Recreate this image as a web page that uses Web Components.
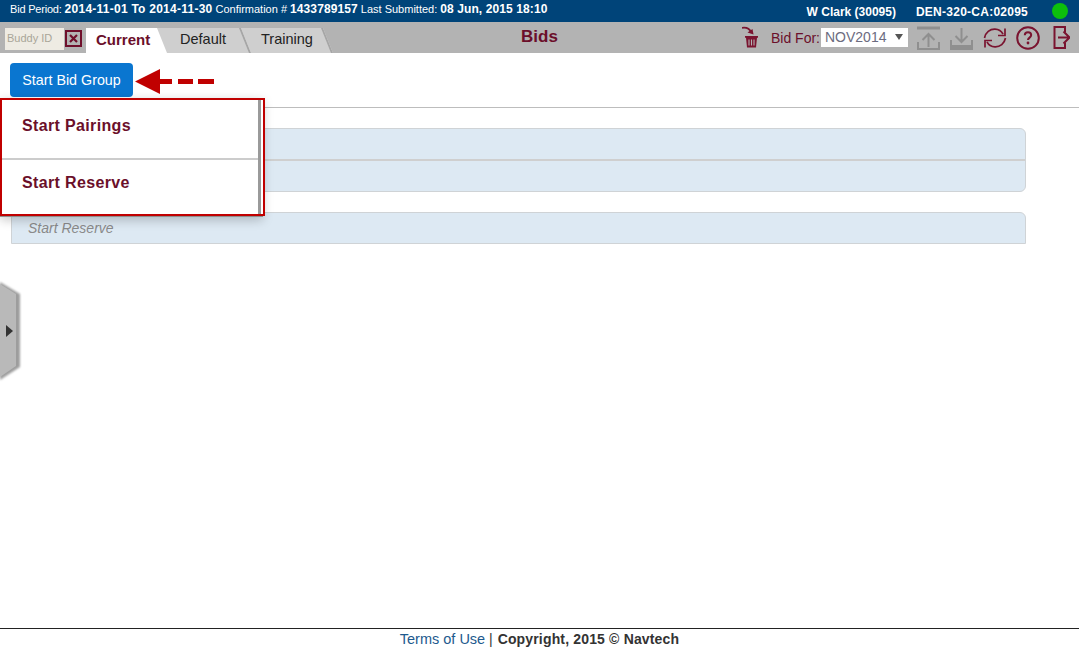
<!DOCTYPE html>
<html>
<head>
<meta charset="utf-8">
<title>Bids</title>
<style>
  html, body { margin: 0; padding: 0; height: 100%; background: #fff; }
  body { font-family: "Liberation Sans", Arial, sans-serif; overflow: hidden; }
  bid-app { height: 648px; }
</style>
</head>
<body>
<bid-app></bid-app>
<script>
class TopBar extends HTMLElement {
  constructor() {
    super();
    this.attachShadow({ mode: "open" }).innerHTML = `
      <style>
      :host {
        display: flex;
        align-items: center;
        height: 22px;
        background: #004479;
        color: #fff;
        font-size: 11px;
        padding: 0 10px;
        white-space: nowrap;
      }
      b { font-size: 12px; letter-spacing: .1px; }
      .info { display: flex; gap: 2px; align-items: baseline; margin-bottom: 5px; }
      .info b { margin-right: 1px; }
      .info span { margin-right: 1px; }
      .info .first { letter-spacing: -.2px; }
      .info b.first { letter-spacing: .25px; }
      .who { margin-left: auto; margin-top: 1px; display: flex; gap: 20px; font-size: 12px; font-weight: bold; padding-right: 24px; }
      .who .code { letter-spacing: .25px; }
      .dot { width: 16px; height: 16px; border-radius: 50%; background: #0dbf0d; margin-right: 1px; }
      </style>
      <div class="info">
        <span class="first">Bid Period:</span><b class="first">2014-11-01 To 2014-11-30</b>
        <span>Confirmation #</span><b>1433789157</b>
        <span>Last Submitted:</span><b>08 Jun, 2015 18:10</b>
      </div>
      <div class="who"><span>W Clark (30095)</span><span class="code">DEN-320-CA:02095</span></div>
      <div class="dot"></div>
    `;
  }
}
customElements.define("top-bar", TopBar);

class ToolBar extends HTMLElement {
  constructor() {
    super();
    this.attachShadow({ mode: "open" }).innerHTML = `
      <style>
      :host {
        display: grid;
        grid-template-columns: 1fr auto 1fr;
        align-items: stretch;
        height: 31px;
        background: #b3b3b3;
        white-space: nowrap;
      }
      .left { display: flex; align-items: flex-end; padding-left: 5px; }
      .buddy {
        width: 59px; height: 22px; box-sizing: border-box;
        background: #eeebe3; color: #a9a598;
        font-size: 11px; line-height: 21px; padding-left: 2px;
        margin-bottom: 3px;
      }
      .clear {
        width: 17px; height: 17px; box-sizing: border-box;
        margin: 0 4px 6px 1px;
        background: #b3b3b3; border: 2px solid #6f0f2b;
      }
      .clear svg { display: block; }
      .tabs { display: flex; align-self: stretch; padding-top: 6px; }
      .tab {
        height: 25px; box-sizing: border-box;
        font-size: 14.5px; line-height: 23px; color: #222;
        background: #cfcfcf;
        position: relative;
        clip-path: polygon(0 0, calc(100% - 10px) 0, 100% 100%, 0 100%);
      }
      .tab::after {
        content: ""; position: absolute; right: 0; top: 0; width: 12px; height: 100%;
        background: #a6a6a6;
        clip-path: polygon(0 0, 2px 0, 100% 100%, calc(100% - 2px) 100%);
      }
      .tab.current { width: 81px; padding-left: 10px; background: #fff; color: #6b0f2a; font-size: 15px; font-weight: bold; z-index: 3; }
      .tab.current::after { display: none; }
      .tab.default { width: 95px; margin-left: -11px; padding-left: 24px; z-index: 2; }
      .tab.training { width: 93px; margin-left: -11px; padding-left: 21px; z-index: 1; }
      .title { font-size: 17px; font-weight: bold; color: #6b0f2a; line-height: 29px; }
      .right { display: flex; align-items: center; justify-content: flex-end; }
      .right svg { display: block; flex: none; }
      .label { font-size: 14px; color: #6b0f2a; margin: 0 1px 0 11px; }
      .select {
        width: 87px; height: 19px; box-sizing: border-box; background: #fff;
        color: #6c6c80; font-size: 14px; line-height: 19px; padding-left: 4px;
        position: relative; margin-right: 9px;
      }
      .select::after {
        content: ""; position: absolute; right: 5px; top: 6px;
        border: 4px solid transparent; border-top: 6px solid #555; border-bottom: 0;
      }
      .icons { display: flex; align-items: center; padding-right: 9px; }
      .icons svg + svg { margin-left: 10px; }
      .icons .help { margin-left: 9px; }
      .icons .exit { margin-left: 13px; }
      </style>
      <div class="left">
        <div class="buddy">Buddy ID</div>
        <div class="clear"><svg width="13" height="13" viewBox="0 0 13 13"><path d="M3 3l7 7M10 3l-7 7" stroke="#6f0f2b" stroke-width="2.2"/></svg></div>
        <div class="tabs">
          <div class="tab current">Current</div>
          <div class="tab default">Default</div>
          <div class="tab training">Training</div>
        </div>
      </div>
      <div class="title">Bids</div>
      <div class="right">
        <svg width="18" height="24" viewBox="0 0 18 24">
          <path d="M0 1.800C4 1.200 7.500 2.500 9 6" fill="none" stroke="#7a1430" stroke-width="1.800"/>
          <path d="M11.500 8.500L5.500 6.500 10.500 3z" fill="#7a1430"/>
          <path d="M3 10h13v1.800h-1l-1 9.700H5l-1-9.700H3z" fill="#7a1430"/>
          <path d="M7 13.500v6M9.500 13.500v6M12 13.500v6" stroke="#b3b3b3" stroke-width="1.100"/>
        </svg>
        <span class="label">Bid For:</span>
        <div class="select">NOV2014</div>
        <div class="icons">
          <svg width="23" height="24" viewBox="0 0 23 24" fill="none" stroke="#8f8f8f" stroke-width="2">
            <path d="M0 2h23" stroke-width="3"/>
            <path d="M11.500 21V8M5.500 14l6-6 6 6"/>
            <path d="M1 16v7h21v-7"/>
          </svg>
          <svg width="23" height="24" viewBox="0 0 23 24" fill="none" stroke="#8f8f8f" stroke-width="2">
            <path d="M11.500 2v14M5.500 10l6 6 6-6"/>
            <path d="M1 14v6h21v-6"/>
            <path d="M0 22.500h23" stroke-width="3"/>
          </svg>
          <svg width="24" height="20" viewBox="0 0 24 20" fill="none" stroke="#7a1430" stroke-width="1.700">
            <path d="M1.500 10C2.500 4.500 7 1 12 1.200c3.500.1 6.500 2 8 5"/>
            <path d="M22 .5v7h-7"/>
            <path d="M22.500 10C21.500 15.500 17 19 12 18.800c-3.500-.1-6.500-2-8-5"/>
            <path d="M2 19.500v-7h7"/>
          </svg>
          <svg class="help" width="24" height="24" viewBox="0 0 24 24" fill="none">
            <circle cx="12" cy="12" r="10.800" stroke="#7a1430" stroke-width="2"/>
            <path d="M8.800 9.300c0-1.800 1.300-3 3.200-3s3.200 1.100 3.200 2.800c0 2.500-3.200 2.500-3.200 5" stroke="#7a1430" stroke-width="2"/>
            <circle cx="12" cy="17" r="1.400" fill="#7a1430"/>
          </svg>
          <svg class="exit" width="17" height="23" viewBox="0 0 17 23" fill="none" stroke="#7a1430" stroke-width="2">
            <path d="M12 6.500V1H1.500v21H12v-5.500"/>
            <path d="M5 11.500h10M10.500 5.500l6 6-6 6"/>
          </svg>
        </div>
      </div>
    `;
  }
}
customElements.define("tool-bar", ToolBar);

class BidRow extends HTMLElement {
  constructor() {
    super();
    this.attachShadow({ mode: "open" }).innerHTML = `
      <style>
      :host {
        display: block;
        height: 30px;
        line-height: 31px;
        padding-left: 16px;
        font-size: 14px;
        font-style: italic;
        color: #8a8a8a;
      }
      :host(:not(:first-child)) { border-top: 2px solid #cfcfcf; }
      </style>
      <slot></slot>
    `;
  }
}
customElements.define("bid-row", BidRow);

class BidPanel extends HTMLElement {
  constructor() {
    super();
    this.attachShadow({ mode: "open" }).innerHTML = `
      <style>
      :host {
        display: block;
        width: 1015px;
        box-sizing: border-box;
        margin-left: 11px;
        background: #dde9f3;
        border: 1px solid #cfd3d6;
        border-radius: 6px;
        overflow: hidden;
      }
      :host([open-end]) { border-radius: 6px 6px 0 0; }
      </style>
      <slot></slot>
    `;
  }
}
customElements.define("bid-panel", BidPanel);

class StartMenu extends HTMLElement {
  constructor() {
    super();
    this.attachShadow({ mode: "open" }).innerHTML = `
      <style>
      :host {
        position: absolute;
        left: 0; top: 98px;
        width: 265px; height: 118px;
      }
      .box {
        width: 263px; height: 119px;
        box-sizing: border-box;
        background: #fff;
        border-bottom: 1px solid #8f8f8f;
        box-shadow: 0 3px 10px rgba(0,0,0,.22);
      }
      .items {
        width: 261px; height: 100%;
        box-sizing: border-box;
        border-right: 3px solid #9a9a9a;
      }
      .item {
        height: 60px; box-sizing: border-box;
        padding: 19px 0 0 22px;
        font-size: 16px; font-weight: bold; color: #6b0f2a; letter-spacing: .35px;
      }
      .item + .item { height: 58px; border-top: 2px solid #cccccc; padding-top: 14px; }
      .frame {
        position: absolute; inset: 0;
        border: 2px solid #c00000;
        pointer-events: none;
      }
      </style>
      <div class="box">
        <div class="items">
          <div class="item">Start Pairings</div>
          <div class="item">Start Reserve</div>
        </div>
      </div>
      <div class="frame"></div>
    `;
  }
}
customElements.define("start-menu", StartMenu);

class CallArrow extends HTMLElement {
  constructor() {
    super();
    this.attachShadow({ mode: "open" }).innerHTML = `
      <style>
      :host { position: absolute; left: 135px; top: 69px; width: 80px; height: 26px; }
      svg { display: block; }
      </style>
      <svg width="80" height="26" viewBox="0 0 80 26" fill="#c00000">
        <path d="M0 12.500L25 0v10h12v5H25v10z"/>
        <rect x="43" y="10" width="15" height="5"/>
        <rect x="63" y="10" width="16" height="5"/>
      </svg>
    `;
  }
}
customElements.define("call-arrow", CallArrow);

class SideHandle extends HTMLElement {
  constructor() {
    super();
    this.attachShadow({ mode: "open" }).innerHTML = `
      <style>
      :host { position: absolute; left: 0; top: 280px; width: 26px; height: 104px; }
      svg { display: block; overflow: visible; }
      </style>
      <svg width="26" height="104" viewBox="0 0 26 104">
        <defs><filter id="b" x="-30%" y="-10%" width="160%" height="120%"><feGaussianBlur stdDeviation="0.800"/></filter></defs>
        <path d="M0 2L20 14V87L0 100z" fill="#9d9d9d" filter="url(#b)"/>
        <path d="M0 4L16 14V86L0 97z" fill="#b9b9b9"/>
        <path d="M6 45l7 6-7 6z" fill="#333"/>
      </svg>
    `;
  }
}
customElements.define("side-handle", SideHandle);

class PageFooter extends HTMLElement {
  constructor() {
    super();
    this.attachShadow({ mode: "open" }).innerHTML = `
      <style>
      :host {
        display: block;
        margin-top: auto;
        height: 19px;
        border-top: 1px solid #222;
        text-align: center;
        font-size: 14px;
        line-height: 21px;
        color: #333;
      }
      a { color: #1d5a8e; text-decoration: none; font-size: 14.500px; }
      b { letter-spacing: .16px; margin-left: 1px; }
      </style>
      <a href="#">Terms of Use</a> | <b>Copyright, 2015 © Navtech</b>
    `;
  }
}
customElements.define("page-footer", PageFooter);

class BidApp extends HTMLElement {
  constructor() {
    super();
    this.attachShadow({ mode: "open" }).innerHTML = `
      <style>
      :host {
        display: flex;
        flex-direction: column;
        position: relative;
        color: #333;
      }
      .actions {
        height: 55px;
        box-sizing: border-box;
        border-bottom: 1px solid #bdbdbd;
        padding: 10px 0 0 10px;
      }
      button {
        display: block;
        width: 123px; height: 34px;
        background: #0a76d0;
        color: #fff;
        border: 0;
        border-radius: 4px;
        padding: 0;
        font: 14.300px "Liberation Sans", Arial, sans-serif;
      }
      .content {
        display: flex;
        flex-direction: column;
        gap: 20px;
        padding-top: 20px;
      }
      </style>
      <top-bar></top-bar>
      <tool-bar></tool-bar>
      <div class="actions"><button>Start Bid Group</button></div>
      <div class="content">
        <bid-panel><bid-row></bid-row><bid-row></bid-row></bid-panel>
        <bid-panel open-end><bid-row>Start Reserve</bid-row></bid-panel>
      </div>
      <page-footer></page-footer>
      <call-arrow></call-arrow>
      <start-menu></start-menu>
      <side-handle></side-handle>
    `;
  }
}
customElements.define("bid-app", BidApp);
</script>
</body>
</html>
